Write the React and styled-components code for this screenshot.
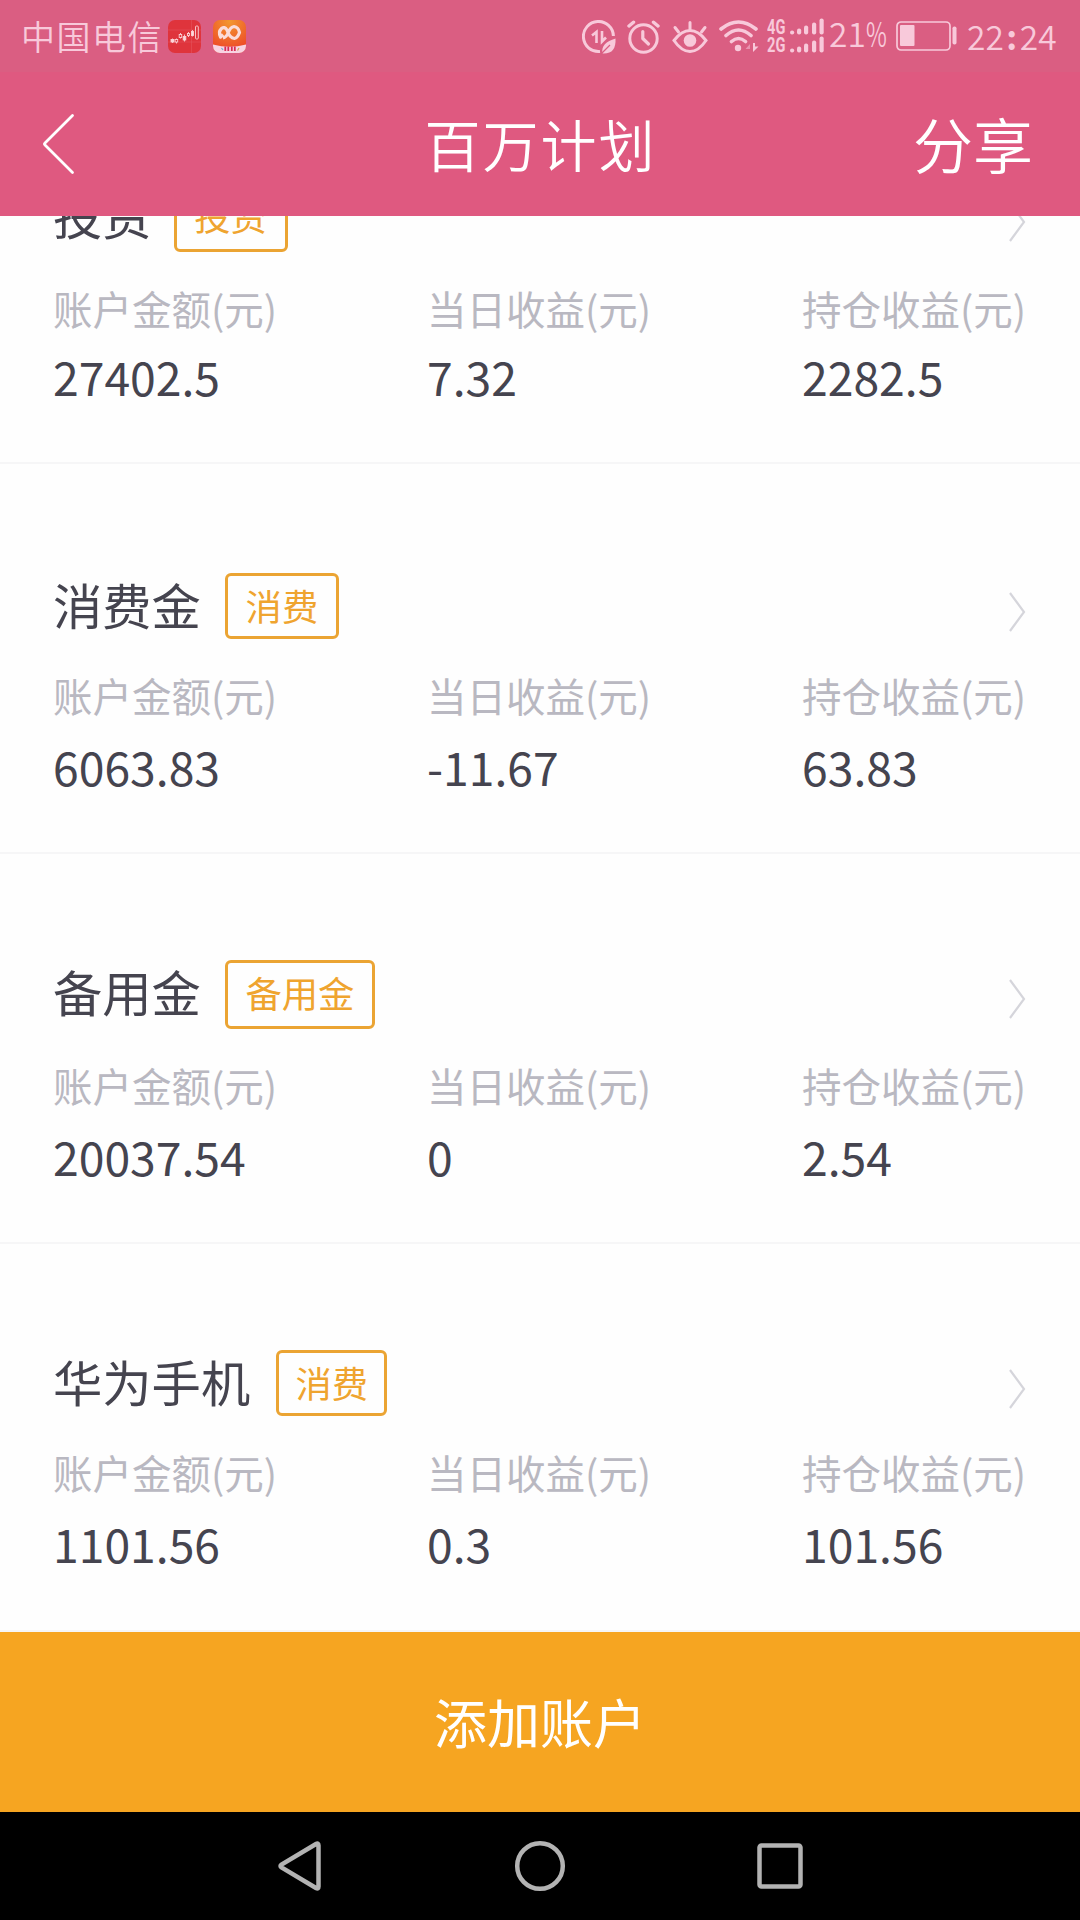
import React from "react";
import styled, { createGlobalStyle } from "styled-components";

const accounts = [
  { name: "投资", tag: "投资", amount: "27402.5", today: "7.32", hold: "2282.5", top: 109, tagW: 114, tagH: 69, gap: 22, valueTop: 0, height: 390 },
  { name: "消费金", tag: "消费", amount: "6063.83", today: "-11.67", hold: "63.83", top: 109, tagW: 114, tagH: 66, gap: 24, valueTop: 3, height: 390 },
  { name: "备用金", tag: "备用金", amount: "20037.54", today: "0", hold: "2.54", top: 106, tagW: 150, tagH: 69, gap: 24, valueTop: 3, height: 390 },
  { name: "华为手机", tag: "消费", amount: "1101.56", today: "0.3", hold: "101.56", top: 106, tagW: 111, tagH: 66, gap: 26, valueTop: 3, height: 388 },
];

const TINT = "#f8c9da";

const StockIcon = () => (
  <svg width="33" height="33" viewBox="0 0 33 33">
    <rect width="33" height="33" rx="7" fill="#df343c" />
    <path d="M0 10H33M0 22H33M23.500 0V33" stroke="#e4525a" strokeWidth="0.600" />
    <g stroke="#fbd0d4" strokeWidth="0.900">
      <path d="M4.500 18.500V23M8.500 18.500V23.500M12.500 13V18.500M16.500 14.500V21.500M20.500 12V17M24.500 10V16.500" />
      <rect x="3" y="19.500" width="3" height="2.500" fill="#fbd9dd" />
      <rect x="7.200" y="19.500" width="2.500" height="2.500" fill="#df343c" />
      <rect x="11.200" y="14.500" width="2.500" height="3" fill="#df343c" />
      <rect x="15.200" y="16.500" width="2.600" height="3.500" fill="#fbd9dd" />
      <rect x="19.500" y="13.500" width="2" height="2" fill="#df343c" />
      <rect x="23.500" y="11.500" width="2" height="4" fill="#fbd9dd" />
      <rect x="27.500" y="6" width="2.800" height="13" rx="1" fill="#df343c" />
    </g>
  </svg>
);

const ShopIcon = () => (
  <svg width="33" height="33" viewBox="0 0 33 33">
    <defs>
      <radialGradient id="shop" cx="0.5" cy="0.05" r="0.8">
        <stop offset="0" stopColor="#f3982f" />
        <stop offset="1" stopColor="#ee5028" />
      </radialGradient>
      <clipPath id="shopClip"><rect width="33" height="33" rx="7" /></clipPath>
    </defs>
    <g clipPath="url(#shopClip)">
      <rect width="33" height="33" fill="url(#shop)" />
      <path d="M0 24.500Q16.500 29 33 24.500V33H0Z" fill="#f8d3e2" />
      <path d="M10 14.500L7.500 17Q5 12 8.500 8.500Q11.500 6 14 10Q16.500 18 21.500 18.500Q24.500 18 26.500 12.500Q25.500 7 21 6.500Q17.500 7 15.500 12Q13.500 17.500 10 18" fill="none" stroke="#fbdcd8" strokeWidth="3.200" strokeLinejoin="round" />
      <path d="M12.300 26.500V31M15.300 26.500V31M18.800 26.500V31M21.800 26.500V31" stroke="#d92d55" strokeWidth="1.800" />
      <path d="M8.500 28L10 30" stroke="#6aaed8" strokeWidth="1.200" />
      <path d="M26 28L24.500 30.500" stroke="#d2a34e" strokeWidth="1.200" />
    </g>
  </svg>
);

const SaverIcon = () => (
  <svg width="34" height="34" viewBox="0 0 34 34" fill="none" stroke={TINT} strokeWidth="3">
    <path d="M31.400 16A15 15 0 1 0 18 31.400" />
    <path d="M14.500 23V12L10 15.500M20 11V21.500L24 17.500" strokeWidth="2.600" />
    <path d="M33.500 18.500C34 29 30 34 20.500 33.500C19 26 24 21.500 33.500 18.500Z" fill={TINT} stroke="none" />
    <path d="M19 34L28 25" stroke="#da5e82" strokeWidth="1.300" />
  </svg>
);

const AlarmIcon = () => (
  <svg width="34" height="34" viewBox="0 0 34 34" fill="none" stroke={TINT} strokeWidth="3" strokeLinecap="round">
    <circle cx="16.500" cy="18.500" r="13.700" />
    <path d="M15.800 11.500V18.500L21.500 24" strokeWidth="3.200" strokeLinejoin="round" />
    <path d="M2 6L6.500 2.200M31 6L26.500 2.200" strokeWidth="3.400" />
  </svg>
);

const EyeIcon = () => (
  <svg width="36" height="34" viewBox="0 0 36 34" fill="none" stroke={TINT} strokeWidth="3" strokeLinecap="round">
    <path d="M2 20.500Q9.500 10.500 18 10.500T34 20.500Q26.500 31.500 18 31.500T2 20.500Z" />
    <circle cx="18" cy="20.500" r="6.300" fill={TINT} stroke="none" />
    <path d="M18 2.500V9M3 7.500L6.500 12M33 7.500L29.500 12" />
  </svg>
);

const WifiIcon = () => (
  <svg width="40" height="34" viewBox="0 0 40 34" fill="none" stroke={TINT} strokeWidth="3.600" strokeLinecap="round">
    <path d="M2 9Q19.500 -5 37 9M7 15.500Q19.500 4.500 32 15.500M12.500 21.500Q19.500 15.500 26.500 21.500" />
    <circle cx="19" cy="28" r="3.200" fill={TINT} stroke="none" />
    <path d="M31 24V32.500M26.500 29L31 24V29Z" stroke="none" fill="#ea93b0" />
    <path d="M34 23V32L39.500 26.500H36V23Z" fill={TINT} stroke="none" />
  </svg>
);

const bars = [[1, 4], [8, 6], [15, 9], [23, 12], [30.5, 16]];

const SignalIcon = () => (
  <svg width="36" height="35" viewBox="0 0 36 35" fill={TINT}>
    {bars.map(([x, h]) => (
      <g key={x}>
        <rect x={x} y={16.5 - h} width="4.200" height={h} rx="2" />
        <rect x={x} y={34.5 - h} width="4.200" height={h} rx="2" />
      </g>
    ))}
  </svg>
);

const BatteryIcon = () => (
  <svg width="61" height="30" viewBox="0 0 61 30">
    <rect x="1" y="1" width="53" height="28" rx="4" fill="none" stroke={TINT} strokeWidth="1.700" />
    <rect x="4" y="4" width="14.500" height="21" rx="1" fill={TINT} />
    <rect x="56.500" y="5.500" width="4" height="18" rx="1.800" fill={TINT} />
  </svg>
);

const Chevron = () => (
  <svg width="18" height="40" viewBox="0 0 18 40">
    <path d="M2 1L16 20L2 39" fill="none" stroke="#d5d5db" strokeWidth="2.200" />
  </svg>
);

const Stat = ({ label, value, offset }) => (
  <StatCol>
    <Label>{label}</Label>
    <Value $top={offset}>{value}</Value>
  </StatCol>
);

const App = () => {
  return (
    <>
      <GlobalStyle />
      <Screen>
        <StatusBar>
          <Carrier>中国电信</Carrier>
          <AppIcons>
            <StockIcon />
            <ShopIcon />
          </AppIcons>
          <StatusIcons>
            <SaverIcon />
            <AlarmIcon />
            <EyeIcon />
            <WifiIcon />
          </StatusIcons>
          <Network>
            <span>4G</span>
            <span>2G</span>
          </Network>
          <SignalIcon />
          <Percent>21<i>%</i></Percent>
          <BatteryIcon />
          <Clock>22<b>:</b>24</Clock>
        </StatusBar>
        <Header>
          <Back type="button" aria-label="back">
            <svg width="34" height="62" viewBox="0 0 34 62">
              <path d="M30.500 2.500L3 30Q2 31 3 32L30.500 59.500" fill="none" stroke="#fff" strokeWidth="2.800" strokeLinecap="round" />
            </svg>
          </Back>
          <Title>百万计划</Title>
          <Share type="button">分享</Share>
        </Header>
        <List>
          {accounts.map((item) => (
            <Account key={item.name} $height={item.height} $top={item.top}>
              <AccountHead $height={item.tagH} $gap={item.gap}>
                <Name>{item.name}</Name>
                <Tag $width={item.tagW}>{item.tag}</Tag>
                <Arrow><Chevron /></Arrow>
              </AccountHead>
              <Stats>
                <Stat label="账户金额(元)" value={item.amount} offset={item.valueTop} />
                <Stat label="当日收益(元)" value={item.today} offset={item.valueTop} />
                <Stat label="持仓收益(元)" value={item.hold} offset={item.valueTop} />
              </Stats>
            </Account>
          ))}
        </List>
        <AddButton type="button">添加账户</AddButton>
        <NavBar>
          <svg width="46" height="52" viewBox="0 0 46 52">
            <path d="M41.500 5.500V46.500Q41.500 49.500 39 48L4.500 27.500Q2.500 26 4.500 24.500L39 4Q41.500 2.500 41.500 5.500Z" />
          </svg>
          <svg width="52" height="52" viewBox="0 0 52 52">
            <circle cx="26" cy="26" r="22.800" />
          </svg>
          <svg width="46" height="46" viewBox="0 0 46 46">
            <rect x="2.500" y="2.500" width="41" height="41" rx="2" />
          </svg>
        </NavBar>
      </Screen>
    </>
  );
};

const GlobalStyle = createGlobalStyle`
  * {
    box-sizing: border-box;
  }

  body {
    margin: 0;
    background: #fefefe;
    font-family: "Noto Sans CJK SC", sans-serif;
  }

  button {
    padding: 0;
    border: 0;
    background: none;
    font-family: inherit;
    color: #fff;
  }

  svg {
    display: block;
    flex-shrink: 0;
  }
`;

const Screen = styled.div`
  width: 1080px;
  height: 1920px;
  display: flex;
  flex-direction: column;
  overflow: hidden;
`;

const StatusBar = styled.div`
  height: 72px;
  flex-shrink: 0;
  display: flex;
  align-items: flex-start;
  padding: 20px 0 0 21px;
  background: #da5e82;
  color: ${TINT};
  white-space: nowrap;
`;

const Carrier = styled.span`
  width: 147px;
  font-size: 34px;
  font-weight: 350;
  line-height: 31px;
  letter-spacing: 1.5px;
`;

const AppIcons = styled.div`
  display: flex;
  gap: 12px;
  width: 414px;
`;

const StatusIcons = styled.div`
  display: flex;
  gap: 11px;
  width: 185px;
`;

const Network = styled.div`
  width: 22px;
  display: flex;
  flex-direction: column;
  font-family: "Roboto", sans-serif;
  font-size: 20px;
  font-weight: 700;
  line-height: 18px;
  margin-top: -2px;

  span {
    transform: scaleX(0.73);
    transform-origin: left;
  }

  & + svg {
    margin-top: -2px;
  }
`;

const Percent = styled.span`
  width: 71px;
  padding-left: 4px;
  font-size: 33.500px;
  font-weight: 350;
  line-height: 26px;

  i {
    display: inline-block;
    font-style: normal;
    transform: scaleX(0.68);
    transform-origin: left;
  }

  & + svg {
    margin-top: 1px;
  }
`;

const Clock = styled.span`
  margin: 3px 0 0 10px;
  font-size: 33.500px;
  font-weight: 350;
  line-height: 25px;

  b {
    display: inline-block;
    width: 16px;
    text-align: center;
  }
`;

const Header = styled.header`
  height: 144px;
  flex-shrink: 0;
  display: grid;
  grid-template-columns: 200px 1fr 200px;
  align-items: center;
  padding: 0 47px 3px 42px;
  background: #df5980;
  color: #fff;
`;

const Back = styled.button`
  justify-self: start;
  padding-top: 2px;
`;

const Title = styled.h1`
  margin: 0;
  padding-left: 6px;
  text-align: center;
  font-size: 56px;
  font-weight: 350;
  line-height: 80px;
  letter-spacing: 2px;
`;

const Share = styled.button`
  justify-self: end;
  font-size: 60px;
  font-weight: 350;
  line-height: 80px;
`;

const List = styled.main`
  height: 1416px;
  flex-shrink: 0;
  display: flex;
  flex-direction: column;
  justify-content: flex-end;
  overflow: hidden;
`;

const Account = styled.section`
  height: ${(p) => p.$height}px;
  flex-shrink: 0;
  padding: ${(p) => p.$top}px 54px 0 53px;
  border-bottom: 2px solid #f6f6f7;
`;

const AccountHead = styled.div`
  display: flex;
  gap: ${(p) => p.$gap}px;
  height: ${(p) => p.$height}px;
`;

const Name = styled.span`
  color: #45444f;
  font-size: 49.300px;
  line-height: 62px;
  white-space: nowrap;
`;

const Tag = styled.span`
  width: ${(p) => p.$width}px;
  height: 100%;
  border: 3px solid #eba433;
  border-radius: 6px;
  color: #efa42f;
  font-size: 36.300px;
  line-height: 59px;
  text-align: center;
  white-space: nowrap;
`;

const Arrow = styled.div`
  margin: 19px 0 0 auto;
`;

const Stats = styled.div`
  display: grid;
  grid-template-columns: 374px 375px 1fr;
  padding-top: 31px;
`;

const StatCol = styled.div`
  white-space: nowrap;
`;

const Label = styled.div`
  color: #b9b8c1;
  font-size: 39.500px;
  line-height: 50px;
`;

const Value = styled.div`
  margin-top: ${(p) => p.$top}px;
  padding-top: 13px;
  color: #45444f;
  font-size: 46.300px;
  line-height: 60px;
`;

const AddButton = styled.button`
  height: 180px;
  flex-shrink: 0;
  padding-bottom: 3px;
  background: #f6a521;
  font-size: 53px;
`;

const NavBar = styled.nav`
  height: 108px;
  flex-shrink: 0;
  display: flex;
  align-items: center;
  justify-content: space-between;
  padding: 0 277px;
  background: #000;

  svg {
    fill: none;
    stroke: #b3b3b3;
    stroke-width: 4.500;
  }
`;

export default App;
